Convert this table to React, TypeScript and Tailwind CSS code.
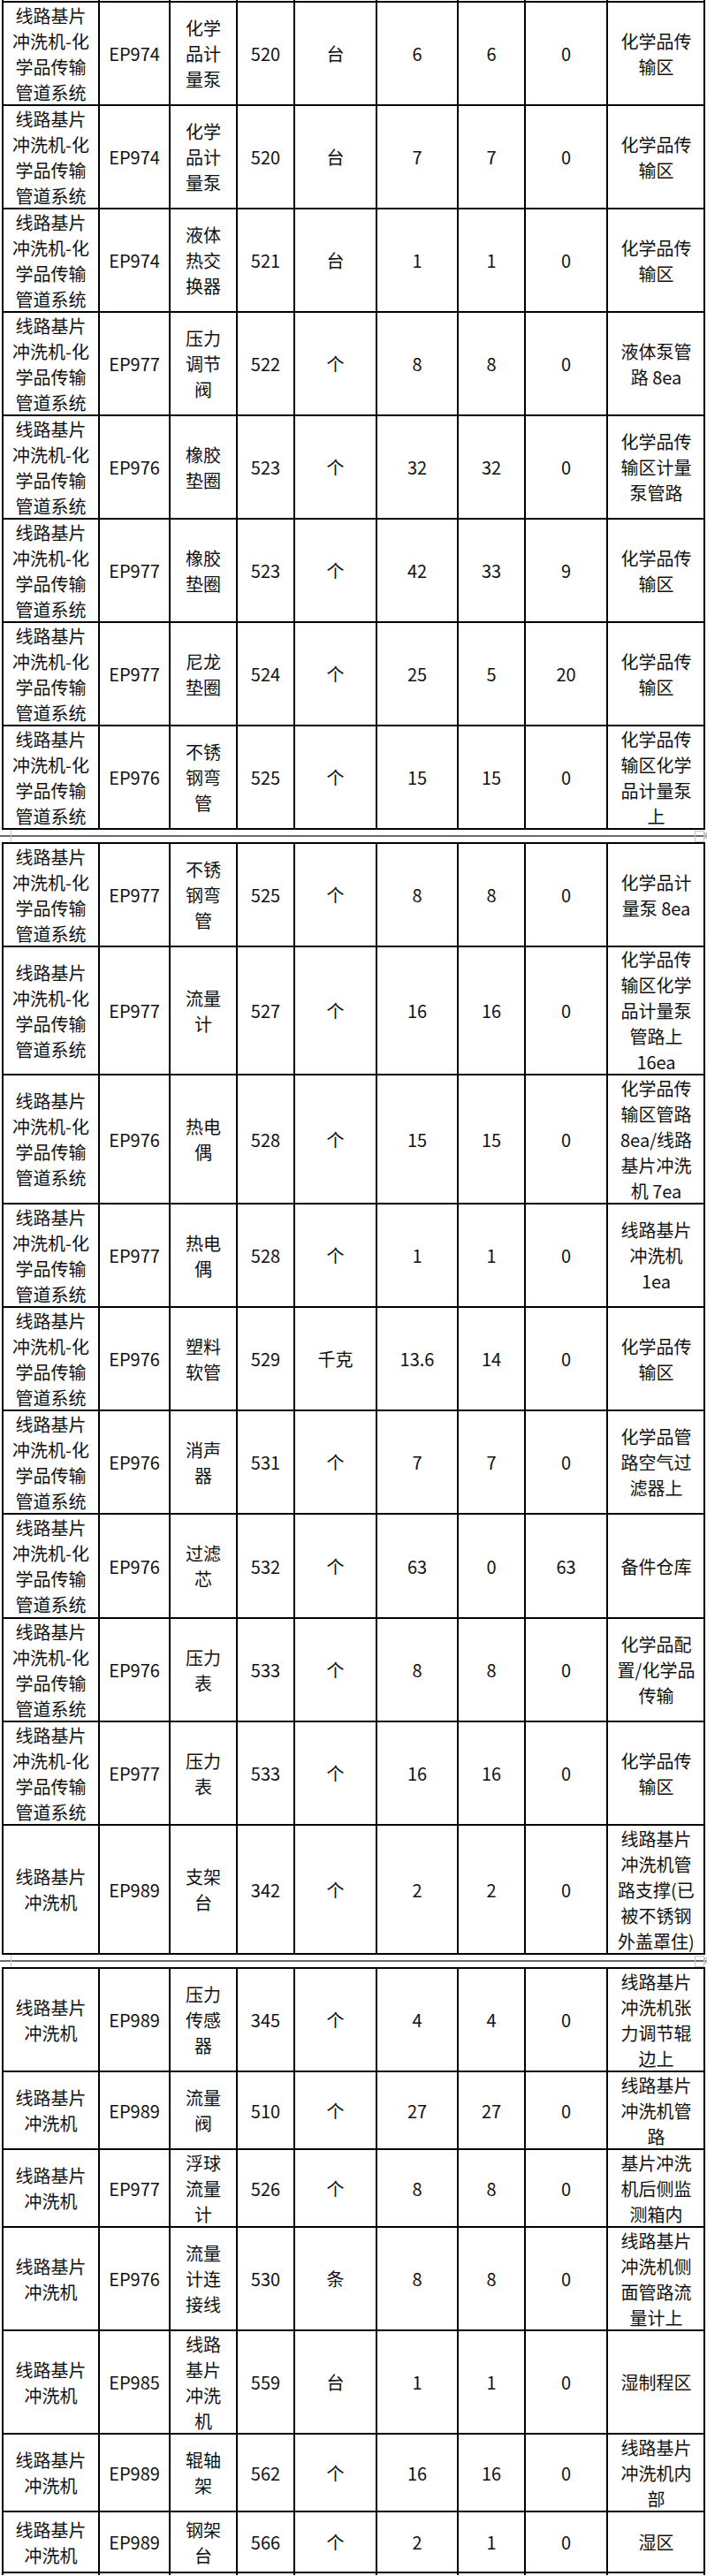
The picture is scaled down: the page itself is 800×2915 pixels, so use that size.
import React from "react"

/** Column widths measured border-to-border (each cell owns its left border). */
const COLS = [
  "w-[109px]",
  "w-[80px]",
  "w-[76px]",
  "w-[65px]",
  "w-[93px]",
  "w-[92px]",
  "w-[76px]",
  "w-[93px]",
  "w-[111px]",
]

const SYS = "线路基片\n冲洗机-化\n学品传输\n管道系统"
const MACH = "线路基片\n冲洗机"

type Row = { cells: string[]; h: string }

const PAGE_1: Row[] = [
  { cells: [SYS, "EP974", "化学\n品计\n量泵", "520", "台", "6", "6", "0", "化学品传\n输区"], h: "h-[117px]" },
  { cells: [SYS, "EP974", "化学\n品计\n量泵", "520", "台", "7", "7", "0", "化学品传\n输区"], h: "h-[117px]" },
  { cells: [SYS, "EP974", "液体\n热交\n换器", "521", "台", "1", "1", "0", "化学品传\n输区"], h: "h-[117px]" },
  { cells: [SYS, "EP977", "压力\n调节\n阀", "522", "个", "8", "8", "0", "液体泵管\n路 8ea"], h: "h-[117px]" },
  { cells: [SYS, "EP976", "橡胶\n垫圈", "523", "个", "32", "32", "0", "化学品传\n输区计量\n泵管路"], h: "h-[117px]" },
  { cells: [SYS, "EP977", "橡胶\n垫圈", "523", "个", "42", "33", "9", "化学品传\n输区"], h: "h-[117px]" },
  { cells: [SYS, "EP977", "尼龙\n垫圈", "524", "个", "25", "5", "20", "化学品传\n输区"], h: "h-[117px]" },
  { cells: [SYS, "EP976", "不锈\n钢弯\n管", "525", "个", "15", "15", "0", "化学品传\n输区化学\n品计量泵\n上"], h: "h-[117px]" },
]

const PAGE_2: Row[] = [
  { cells: [SYS, "EP977", "不锈\n钢弯\n管", "525", "个", "8", "8", "0", "化学品计\n量泵 8ea"], h: "h-[117px]" },
  { cells: [SYS, "EP977", "流量\n计", "527", "个", "16", "16", "0", "化学品传\n输区化学\n品计量泵\n管路上\n16ea"], h: "h-[145px]" },
  { cells: [SYS, "EP976", "热电\n偶", "528", "个", "15", "15", "0", "化学品传\n输区管路\n8ea/线路\n基片冲洗\n机 7ea"], h: "h-[146px]" },
  { cells: [SYS, "EP977", "热电\n偶", "528", "个", "1", "1", "0", "线路基片\n冲洗机\n1ea"], h: "h-[117px]" },
  { cells: [SYS, "EP976", "塑料\n软管", "529", "千克", "13.6", "14", "0", "化学品传\n输区"], h: "h-[117px]" },
  { cells: [SYS, "EP976", "消声\n器", "531", "个", "7", "7", "0", "化学品管\n路空气过\n滤器上"], h: "h-[117px]" },
  { cells: [SYS, "EP976", "过滤\n芯", "532", "个", "63", "0", "63", "备件仓库"], h: "h-[118px]" },
  { cells: [SYS, "EP976", "压力\n表", "533", "个", "8", "8", "0", "化学品配\n置/化学品\n传输"], h: "h-[117px]" },
  { cells: [SYS, "EP977", "压力\n表", "533", "个", "16", "16", "0", "化学品传\n输区"], h: "h-[117px]" },
  { cells: [MACH, "EP989", "支架\n台", "342", "个", "2", "2", "0", "线路基片\n冲洗机管\n路支撑(已\n被不锈钢\n外盖罩住)"], h: "h-[146px]" },
]

const PAGE_3: Row[] = [
  { cells: [MACH, "EP989", "压力\n传感\n器", "345", "个", "4", "4", "0", "线路基片\n冲洗机张\n力调节辊\n边上"], h: "h-[117px]" },
  { cells: [MACH, "EP989", "流量\n阀", "510", "个", "27", "27", "0", "线路基片\n冲洗机管\n路"], h: "h-[88px]" },
  { cells: [MACH, "EP977", "浮球\n流量\n计", "526", "个", "8", "8", "0", "基片冲洗\n机后侧监\n测箱内"], h: "h-[88px]" },
  { cells: [MACH, "EP976", "流量\n计连\n接线", "530", "条", "8", "8", "0", "线路基片\n冲洗机侧\n面管路流\n量计上"], h: "h-[117px]" },
  { cells: [MACH, "EP985", "线路\n基片\n冲洗\n机", "559", "台", "1", "1", "0", "湿制程区"], h: "h-[117px]" },
  { cells: [MACH, "EP989", "辊轴\n架", "562", "个", "16", "16", "0", "线路基片\n冲洗机内\n部"], h: "h-[88px]" },
  { cells: [MACH, "EP989", "钢架\n台", "566", "个", "2", "1", "0", "湿区"], h: "h-[69px]" },
]

function TableRow({ row }: { row: Row }) {
  return (
    <div className={`flex border-r-2 border-b-2 border-black ${row.h}`}>
      {row.cells.map((text, i) => (
        <div
          key={i}
          className={`flex shrink-0 items-center justify-center border-l-2 border-black text-center whitespace-pre-line ${COLS[i]}`}
        >
          {text}
        </div>
      ))}
    </div>
  )
}

/** Cut-off edge of the neighbouring row: only the vertical rules show. */
function Stub({ h }: { h: string }) {
  return (
    <div className={`flex border-r-2 border-black ${h}`}>
      {COLS.map((w, i) => (
        <div key={i} className={`shrink-0 border-l-2 border-black ${w}`} />
      ))}
    </div>
  )
}

function PageTable({ rows }: { rows: Row[] }) {
  return (
    <div className="border-t-2 border-black">
      {rows.map((r, i) => (
        <TableRow key={i} row={r} />
      ))}
    </div>
  )
}

/** Word page-break marker between the table pieces. */
function PageBreak() {
  return (
    <div className="relative -ml-[2px] h-[14px] w-[800px] pt-[6px]">
      <div className="h-[2px] w-full bg-[#6a6a6a]" />
      <div className="absolute left-[12px] top-0 h-[14px] w-px bg-[#c4c4c4]" />
      <div className="absolute left-[786px] top-[1px] h-[13px] w-[11px] border border-[#c4c4c4]" />
      <div className="absolute left-[797px] top-[3px] h-[7px] w-[3px] border border-[#c4c4c4]" />
    </div>
  )
}

export default function App() {
  return (
    <div className="h-[2915px] w-[800px] overflow-hidden bg-white font-['Noto_Sans_CJK_SC',sans-serif] text-[20px] leading-[29px] text-[#111]">
      <div className="ml-[2px] w-[796px]">
        <Stub h="h-[1px]" />
        <PageTable rows={PAGE_1} />
        <PageBreak />
        <PageTable rows={PAGE_2} />
        <PageBreak />
        <PageTable rows={PAGE_3} />
        <Stub h="h-[2px]" />
      </div>
    </div>
  )
}
